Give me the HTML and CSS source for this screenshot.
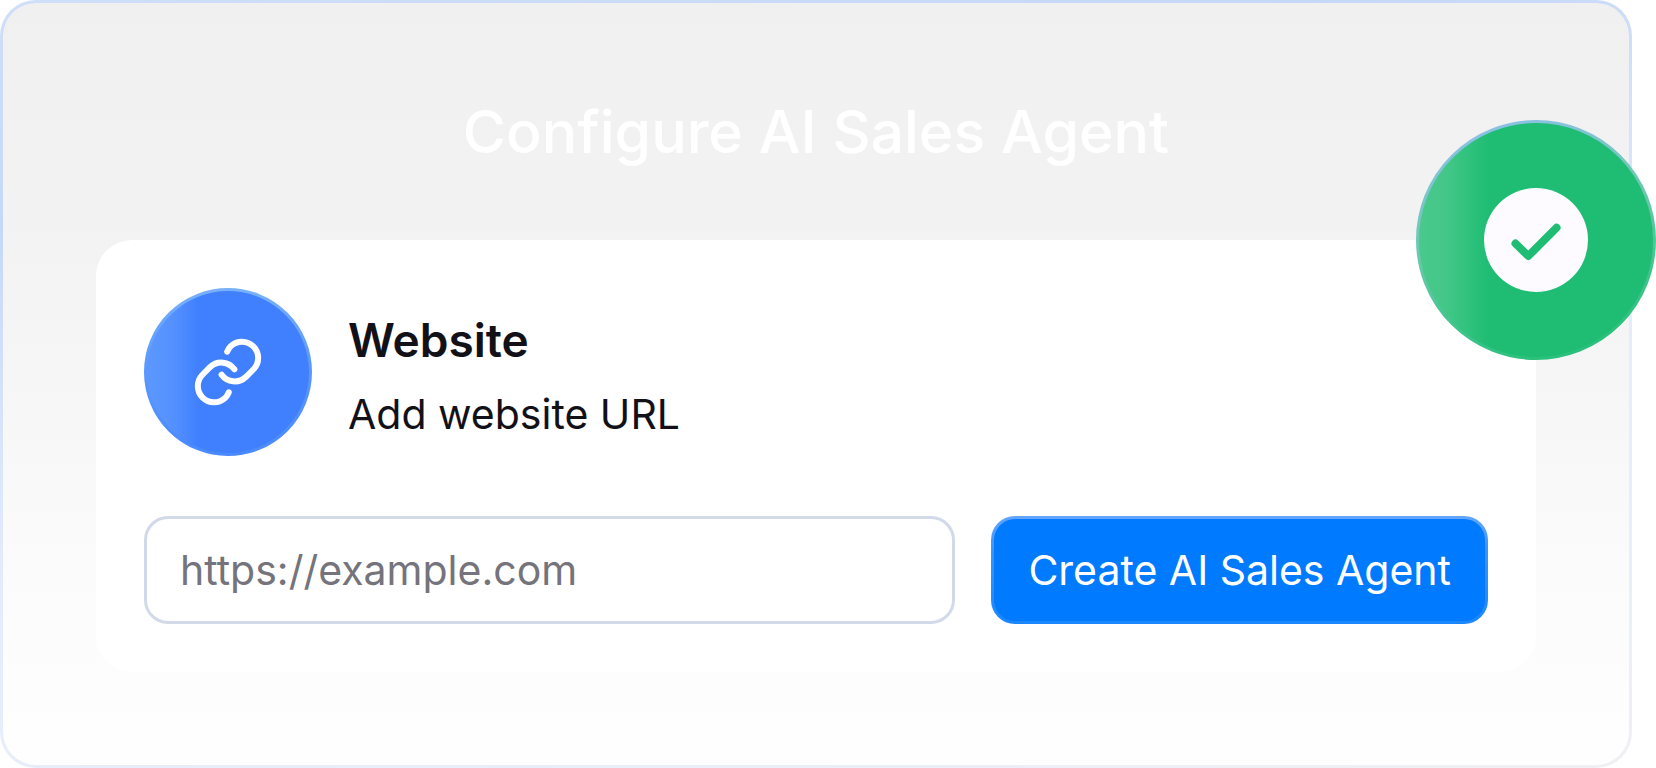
FILE: index.html
```html
<!DOCTYPE html>
<html lang="en">
<head>
<meta charset="utf-8">
<meta name="viewport" content="width=device-width, initial-scale=1">
<title>Configure AI Sales Agent</title>
<link rel="stylesheet" href="styles.css">
</head>
<body>
<main class="stage">
  <section class="panel">
    <h1 class="panel-title">Configure AI Sales Agent</h1>
    <form class="card">
      <div class="source">
        <svg class="source-icon" viewBox="0 0 168 168" aria-hidden="true">
          <defs>
            <linearGradient id="blue-fill" x1="0" x2="1" y1="0" y2="0">
              <stop offset="0" stop-color="#5c98ff"/>
              <stop offset="0.16" stop-color="#5592ff"/>
              <stop offset="0.32" stop-color="#4080ff"/>
            </linearGradient>
            <linearGradient id="blue-rim" x1="0" x2="0" y1="0" y2="1">
              <stop offset="0" stop-color="#78b0f8"/>
              <stop offset="0.5" stop-color="#5a97fe"/>
              <stop offset="1" stop-color="#4a89ff"/>
            </linearGradient>
          </defs>
          <circle cx="84" cy="84" r="82.5" fill="url(#blue-fill)" stroke="url(#blue-rim)" stroke-width="3"/>
          <g fill="none" stroke="#fff" stroke-width="6" stroke-linecap="round">
            <path d="M83.2 63.6Q84.4 60.6 86.8 58.2A16.2 16.2 0 0 1 109.8 81L101.8 89A16.2 16.2 0 0 1 77.6 86.7"/>
            <path transform="rotate(180 84 84)" d="M83.2 63.6Q84.4 60.6 86.8 58.2A16.2 16.2 0 0 1 109.8 81L101.8 89A16.2 16.2 0 0 1 77.6 86.7"/>
          </g>
        </svg>
        <div class="source-text">
          <h2 class="source-name">Website</h2>
          <label class="source-hint" for="site-url">Add website URL</label>
        </div>
      </div>
      <div class="controls">
        <input class="url-input" id="site-url" type="url" placeholder="https://example.com">
        <button class="create-button" type="button">Create AI Sales Agent</button>
      </div>
    </form>
  </section>
  <svg class="badge" viewBox="0 0 240 240" role="img" aria-label="Done">
    <defs>
      <linearGradient id="green-fill" x1="0" x2="1" y1="0" y2="0">
        <stop offset="0" stop-color="#4ac98d"/>
        <stop offset="0.12" stop-color="#43c788"/>
        <stop offset="0.3" stop-color="#1fbd73"/>
      </linearGradient>
      <linearGradient id="green-rim" x1="0.2" x2="0.5" y1="0" y2="1">
        <stop offset="0" stop-color="#8fc0ea"/>
        <stop offset="0.45" stop-color="#6cc9b0"/>
        <stop offset="1" stop-color="#2bc07b"/>
      </linearGradient>
    </defs>
    <circle cx="120" cy="120" r="118.5" fill="url(#green-fill)" stroke="url(#green-rim)" stroke-width="3"/>
    <circle cx="120" cy="120" r="52" fill="#fdfbff"/>
    <path d="M99.5 123.5L112.3 136L140.5 107.7" fill="none" stroke="#1fbd73" stroke-width="8" stroke-linecap="round" stroke-linejoin="round"/>
  </svg>
</main>
</body>
</html>
```
FILE: styles.css
```css
* {
  box-sizing: border-box;
}

body {
  margin: 0;
  background: #fff;
  color: #131118;
  font-family: Inter, "Liberation Sans", sans-serif;
}

.stage {
  position: relative;
  min-height: 100vh;
  padding-right: 24px;
  display: flex;
}

.panel {
  flex: 1;
  min-width: 0;
  padding: 93px;
  border: 3px solid transparent;
  border-radius: 36px;
  background:
    linear-gradient(180deg, #f0f0f1 0%, #f3f3f4 33%, #fcfcfc 80%, #fefefe 100%) padding-box,
    linear-gradient(170deg, #cfdff8 0%, #c6d8f8 22%, #e4ecfb 55%, #e8eefa 80%, #f0f0f3 100%) border-box;
}

.panel-title {
  margin: 0 0 72px;
  color: #fff;
  font-size: 59px;
  font-weight: 500;
  line-height: 72px;
  text-align: center;
}

.card {
  padding: 48px;
  border-radius: 36px;
  background: #fff;
}

.source {
  display: flex;
  align-items: center;
  gap: 36px;
  margin-bottom: 60px;
}

.source-icon {
  flex: none;
  width: 168px;
  height: 168px;
}

.source-text {
  display: flex;
  flex-direction: column;
  gap: 8px;
  padding-top: 4px;
}

.source-name {
  margin: 0;
  font-size: 46px;
  font-weight: 600;
  line-height: 72px;
}

.source-hint {
  font-size: 41px;
  line-height: 60px;
}

.controls {
  display: flex;
  gap: 36px;
}

.url-input,
.create-button {
  height: 108px;
  border-radius: 24px;
  font-family: inherit;
  font-size: 41px;
}

.url-input {
  flex: 1;
  min-width: 0;
  padding: 0 33px;
  border: 3px solid #d2d9e8;
  background: #fff;
  color: #131118;
}

.url-input::placeholder {
  color: #75737b;
  opacity: 1;
}

.create-button {
  flex: none;
  padding: 0 34px;
  border: 3px solid transparent;
  background:
    linear-gradient(#007aff, #007aff) padding-box,
    linear-gradient(180deg, #62a6ff 0%, #3b95ff 30%, #1a86ff 100%) border-box;
  color: #fff;
}

.badge {
  position: absolute;
  top: 120px;
  right: 0;
  width: 240px;
  height: 240px;
}
```
